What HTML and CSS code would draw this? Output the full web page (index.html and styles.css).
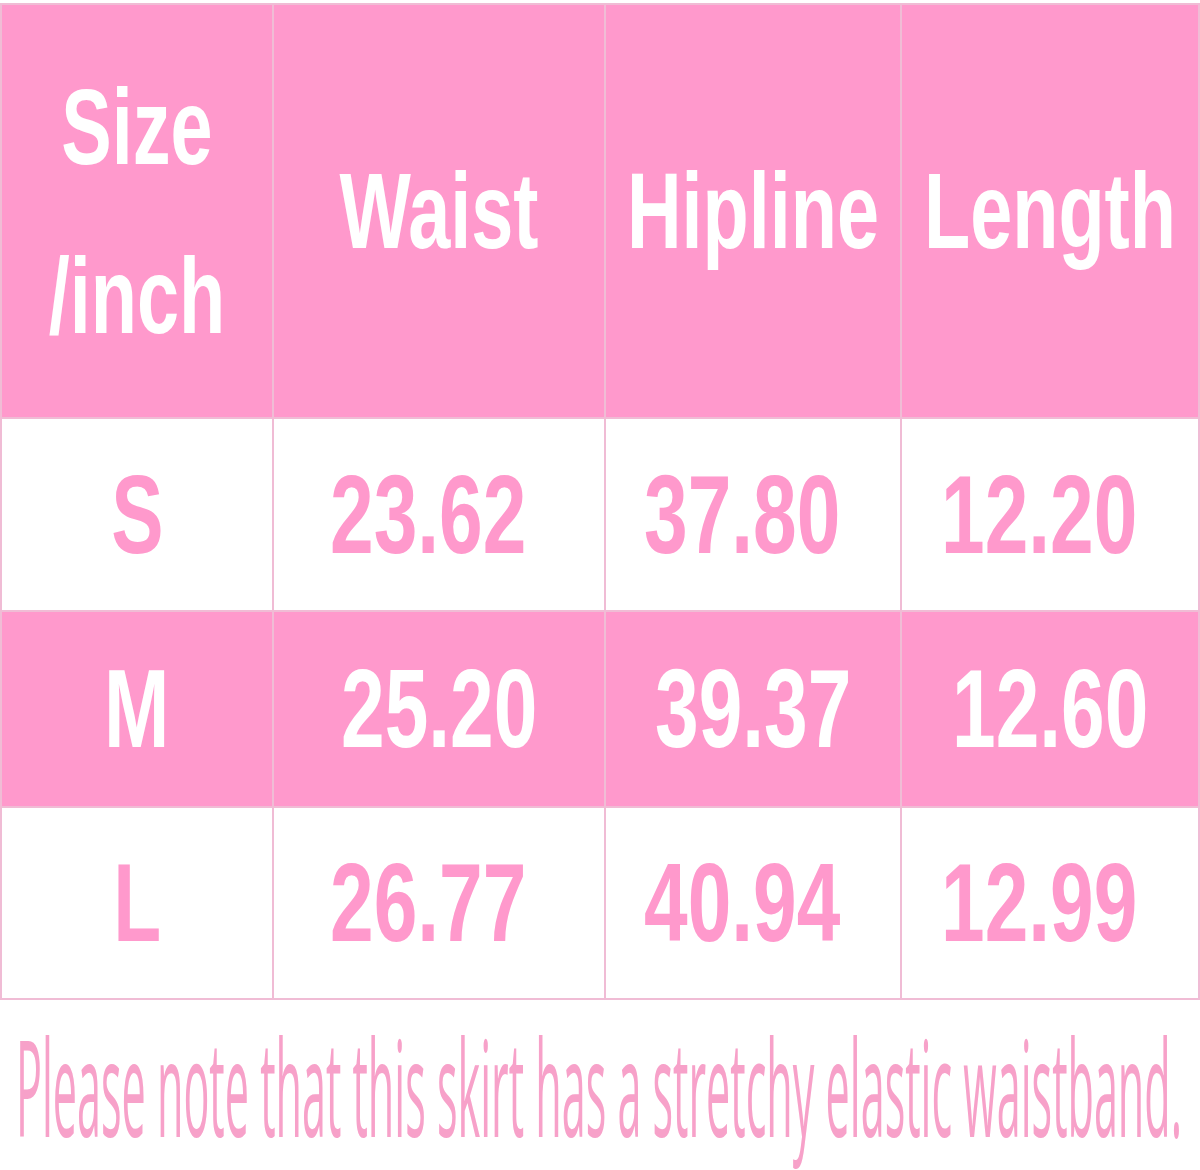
FILE: index.html
```html
<!DOCTYPE html>
<html>
<head>
<meta charset="utf-8">
<link rel="stylesheet" href="styles.css">
</head>
<body>
<div class="page">
  <div class="chart">
    <div class="cell head"><span class="t hd two">Size<br>/inch</span></div>
    <div class="cell head"><span class="t hd">Waist</span></div>
    <div class="cell head"><span class="t hd">Hipline</span></div>
    <div class="cell head"><span class="t hd">Length</span></div>

    <div class="cell light"><span class="t num">S</span></div>
    <div class="cell light off"><span class="t num">23.62</span></div>
    <div class="cell light off"><span class="t num">37.80</span></div>
    <div class="cell light off"><span class="t num">12.20</span></div>

    <div class="cell pink"><span class="t num">M</span></div>
    <div class="cell pink"><span class="t num">25.20</span></div>
    <div class="cell pink"><span class="t num">39.37</span></div>
    <div class="cell pink"><span class="t num">12.60</span></div>

    <div class="cell light"><span class="t num">L</span></div>
    <div class="cell light off"><span class="t num">26.77</span></div>
    <div class="cell light off"><span class="t num">40.94</span></div>
    <div class="cell light off"><span class="t num">12.99</span></div>
  </div>
  <svg class="note" width="1200" height="190" viewBox="0 0 1200 190">
    <g transform="translate(0,147) scale(1,3.325)">
      <text class="note-text" x="16" y="0" textLength="1166" lengthAdjust="spacingAndGlyphs">Please note that this skirt has a stretchy elastic waistband.</text>
    </g>
  </svg>
</div>
</body>
</html>
```
FILE: styles.css
```css
html, body {
  margin: 0;
  padding: 0;
  background: #ffffff;
}
.page {
  width: 1200px;
  height: 1170px;
  padding-top: 3px;
  box-sizing: border-box;
  overflow: hidden;
}
.chart {
  display: grid;
  grid-template-columns: 270px 330px 294px 296px;
  grid-template-rows: 412px 191px 194px 190px;
  gap: 2px;
  border: 2px solid #f0bcd5;
  background: #f0bcd5;
  width: 1200px;
  box-sizing: border-box;
}
.cell {
  display: flex;
  align-items: center;
  justify-content: center;
  overflow: visible;
}
.head, .pink {
  background: #ff99cc;
  color: #ffffff;
}
.light {
  background: #ffffff;
  color: #ff99cc;
}
.off {
  padding-right: 22px;
}
.t {
  display: inline-block;
  white-space: nowrap;
  font-family: "Liberation Sans", Arial, sans-serif;
  font-weight: 700;
  transform: scaleX(0.7);
  text-align: center;
}
.hd {
  font-size: 108px;
  line-height: 108px;
}
.hd.two {
  line-height: 169px;
}
.num {
  font-size: 112px;
  line-height: 112px;
}
.note {
  display: block;
  margin-top: -10px;
}
.note-text {
  font-family: "Open Sans", sans-serif;
  font-weight: 500;
  font-size: 40px;
  fill: #f7a1c9;
}
```
